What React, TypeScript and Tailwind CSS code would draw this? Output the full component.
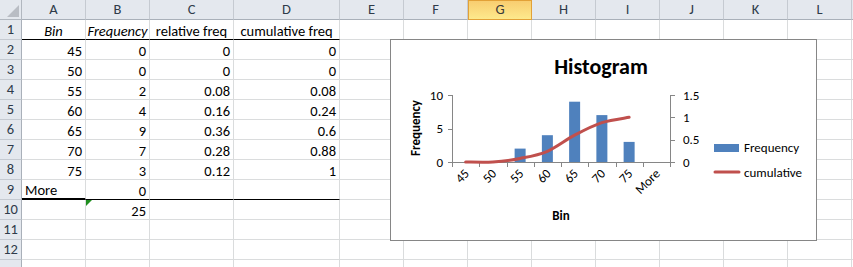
import React from 'react';

const COLS = [
  { name: 'A', w: 64 },
  { name: 'B', w: 64 },
  { name: 'C', w: 84 },
  { name: 'D', w: 106 },
  { name: 'E', w: 64 },
  { name: 'F', w: 64 },
  { name: 'G', w: 64 },
  { name: 'H', w: 64 },
  { name: 'I', w: 64 },
  { name: 'J', w: 64 },
  { name: 'K', w: 64 },
  { name: 'L', w: 64 },
];

type Cell = { v: string; align?: 'l' | 'r' | 'c'; italic?: boolean };

const bins = ['45', '50', '55', '60', '65', '70', '75'];
const freq = [0, 0, 2, 4, 9, 7, 3, 0];
const rel = ['0', '0', '0.08', '0.16', '0.36', '0.28', '0.12'];
const cum = ['0', '0', '0.08', '0.24', '0.6', '0.88', '1'];
const cumVals = [0, 0, 0.08, 0.24, 0.6, 0.88, 1];

const rows: Cell[][] = [
  [
    { v: 'Bin', align: 'c', italic: true },
    { v: 'Frequency', align: 'c', italic: true },
    { v: 'relative freq', align: 'c' },
    { v: 'cumulative freq', align: 'c' },
  ],
  ...bins.map((b, i) => [
    { v: b, align: 'r' as const },
    { v: String(freq[i]), align: 'r' as const },
    { v: rel[i], align: 'r' as const },
    { v: cum[i], align: 'r' as const },
  ]),
  [{ v: 'More', align: 'l' }, { v: '0', align: 'r' }],
  [{ v: '' }, { v: '25', align: 'r' }],
  [],
  [],
  [],
];

const font = { fontFamily: 'Carlito, Lato, "Liberation Sans", sans-serif' };

function cellBorder(r: number, c: number) {
  if (r === 1 && c < 4) return 'border-b border-b-black';
  if (r === 9 && c === 0) return 'border-b-2 border-b-black';
  if (r === 9 && c < 4) return 'border-b border-b-black';
  return 'border-b border-b-[#dadcdd]';
}

// chart geometry, relative to the chart box
const X0 = 62;
const X1 = 280;
const YT = 56;
const YB = 123;
const CW = (X1 - X0) / 8;
const cx = (i: number) => X0 + CW * (i + 0.5);

function smoothPath(pts: [number, number][]) {
  let d = `M${pts[0][0]},${pts[0][1]}`;
  for (let i = 0; i < pts.length - 1; i++) {
    const p0 = pts[i - 1] || pts[i];
    const p1 = pts[i];
    const p2 = pts[i + 1];
    const p3 = pts[i + 2] || p2;
    const t = 1 / 6;
    const c1 = [p1[0] + (p2[0] - p0[0]) * t, p1[1] + (p2[1] - p0[1]) * t];
    const c2 = [p2[0] - (p3[0] - p1[0]) * t, p2[1] - (p3[1] - p1[1]) * t];
    d += ` C${c1[0]},${c1[1]} ${c2[0]},${c2[1]} ${p2[0]},${p2[1]}`;
  }
  return d;
}

function Chart() {
  const linePts = cumVals.map((v, i) => [cx(i), YB - v * ((YB - YT) / 1.5)] as [number, number]);
  const labels = [...bins, 'More'];
  return (
    <div className="absolute left-[390px] top-[39px] w-[427px] h-[202px] bg-white border border-[#868686]">
      <svg width={425} height={200} viewBox="1 1 425 200" style={font}>
        <text x={211} y={35} textAnchor="middle" fontSize={22} fontWeight={700} fill="#000">
          Histogram
        </text>

        {/* left axis */}
        <line x1={X0 + 0.5} y1={YT} x2={X0 + 0.5} y2={YB} stroke="#868686" />
        {[0, 5, 10].map((v) => {
          const y = YB - v * 6.7;
          return (
            <g key={v}>
              <line x1={X0 - 4} y1={Math.round(y) + 0.5} x2={X0} y2={Math.round(y) + 0.5} stroke="#868686" />
              <text x={53} y={y + 4.5} textAnchor="end" fontSize={13} fill="#000">
                {v}
              </text>
            </g>
          );
        })}

        {/* right axis */}
        <line x1={X1 + 0.5} y1={YT} x2={X1 + 0.5} y2={YB} stroke="#868686" />
        {['0', '0.5', '1', '1.5'].map((v, i) => {
          const y = YB - i * ((YB - YT) / 3);
          return (
            <g key={v}>
              <line x1={X1} y1={Math.round(y) + 0.5} x2={X1 + 5} y2={Math.round(y) + 0.5} stroke="#868686" />
              <text x={293} y={y + 4.5} fontSize={13} fill="#000">
                {v}
              </text>
            </g>
          );
        })}

        {/* x axis */}
        <line x1={X0} y1={YB + 0.5} x2={X1} y2={YB + 0.5} stroke="#868686" />
        {Array.from({ length: 9 }).map((_, i) => (
          <line
            key={i}
            x1={Math.round(X0 + CW * i) + 0.5}
            y1={YB}
            x2={Math.round(X0 + CW * i) + 0.5}
            y2={YB + 5}
            stroke="#868686"
          />
        ))}

        {/* bars */}
        {freq.map((f, i) =>
          f > 0 ? (
            <rect key={i} x={cx(i) - 5.5} y={YB - f * 6.7} width={11} height={f * 6.7} fill="#4f81bd" />
          ) : null
        )}

        <path d={smoothPath(linePts)} fill="none" stroke="#c0504d" strokeWidth={3} strokeLinecap="round" />

        {labels.map((l, i) => {
          const ax = cx(i) + 4.4;
          const ay = 135.4;
          return (
            <text
              key={l}
              x={ax}
              y={ay}
              textAnchor="end"
              fontSize={13}
              fill="#000"
              transform={`rotate(-45 ${ax} ${ay})`}
            >
              {l}
            </text>
          );
        })}

        <text x={171} y={181} textAnchor="middle" fontSize={13} fontWeight={700} fill="#000">
          Bin
        </text>
        <text
          x={30}
          y={89}
          textAnchor="middle"
          fontSize={13}
          fontWeight={700}
          fill="#000"
          transform="rotate(-90 30 89)"
        >
          Frequency
        </text>

        {/* legend */}
        <rect x={324} y={105} width={25} height={8} fill="#4f81bd" />
        <text x={354} y={113} fontSize={13} fill="#000">
          Frequency
        </text>
        <line x1={325} y1={133} x2={349} y2={133} stroke="#c0504d" strokeWidth={3} strokeLinecap="round" />
        <text x={354} y={138} fontSize={13} fill="#000">
          cumulative
        </text>
      </svg>
    </div>
  );
}

export default function App() {
  return (
    <div className="relative w-[853px] h-[267px] overflow-hidden bg-white text-[14.5px] text-black" style={font}>
      {/* column headers */}
      <div className="flex h-[20px]">
        <div className="relative w-[22px] h-[20px] shrink-0 bg-[#e4e8ee] border-r border-b border-[#b1b7bf]">
          <svg className="absolute left-[7px] top-[5px]" width={12} height={12}>
            <polygon points="12,0 12,12 0,12" fill="#b9bdc4" />
          </svg>
        </div>
        {COLS.map((c) => (
          <div
            key={c.name}
            style={{ width: c.w }}
            className={
              c.name === 'G'
                ? 'shrink-0 h-[20px] flex items-center justify-center bg-gradient-to-b from-[#f8cd70] to-[#fde98c] border border-[#e2a137] text-[#3a3a3a]'
                : 'shrink-0 h-[20px] flex items-center justify-center bg-[#e4e8ee] border-r border-r-[#c5cad1] border-b border-b-[#a9b0b9] text-[#2f3b4a]'
            }
          >
            {c.name}
          </div>
        ))}
        <div className="flex-1 bg-[#e4e8ee] border-b border-b-[#a9b0b9]" />
      </div>

      {rows.map((row, r) => (
        <div key={r} className="flex h-[20px]">
          <div className="w-[22px] h-[20px] shrink-0 flex items-center justify-center bg-[#e4e8ee] border-r border-r-[#a9b0b9] border-b border-b-[#c5cad1] text-[#2f3b4a]">
            {r < 12 ? r + 1 : ''}
          </div>
          {COLS.map((c, ci) => {
            const cell = row[ci];
            const align =
              cell?.align === 'r' ? 'justify-end pr-[3px]' : cell?.align === 'c' ? 'justify-center' : 'justify-start pl-[3px]';
            return (
              <div
                key={c.name}
                style={{ width: c.w }}
                className={`relative shrink-0 h-[20px] flex items-end pb-[1px] leading-none whitespace-nowrap border-r border-r-[#dadcdd] ${cellBorder(
                  r + 1,
                  ci
                )} ${align} ${cell?.italic ? 'italic' : ''}`}
              >
                {r === 9 && ci === 1 && (
                  <svg className="absolute left-0 top-0" width={6} height={6}>
                    <polygon points="0,0 6,0 0,6" fill="#1f8f1f" />
                  </svg>
                )}
                {cell?.v}
              </div>
            );
          })}
          <div className="flex-1 border-b border-b-[#dadcdd]" />
        </div>
      ))}

      <Chart />
    </div>
  );
}
